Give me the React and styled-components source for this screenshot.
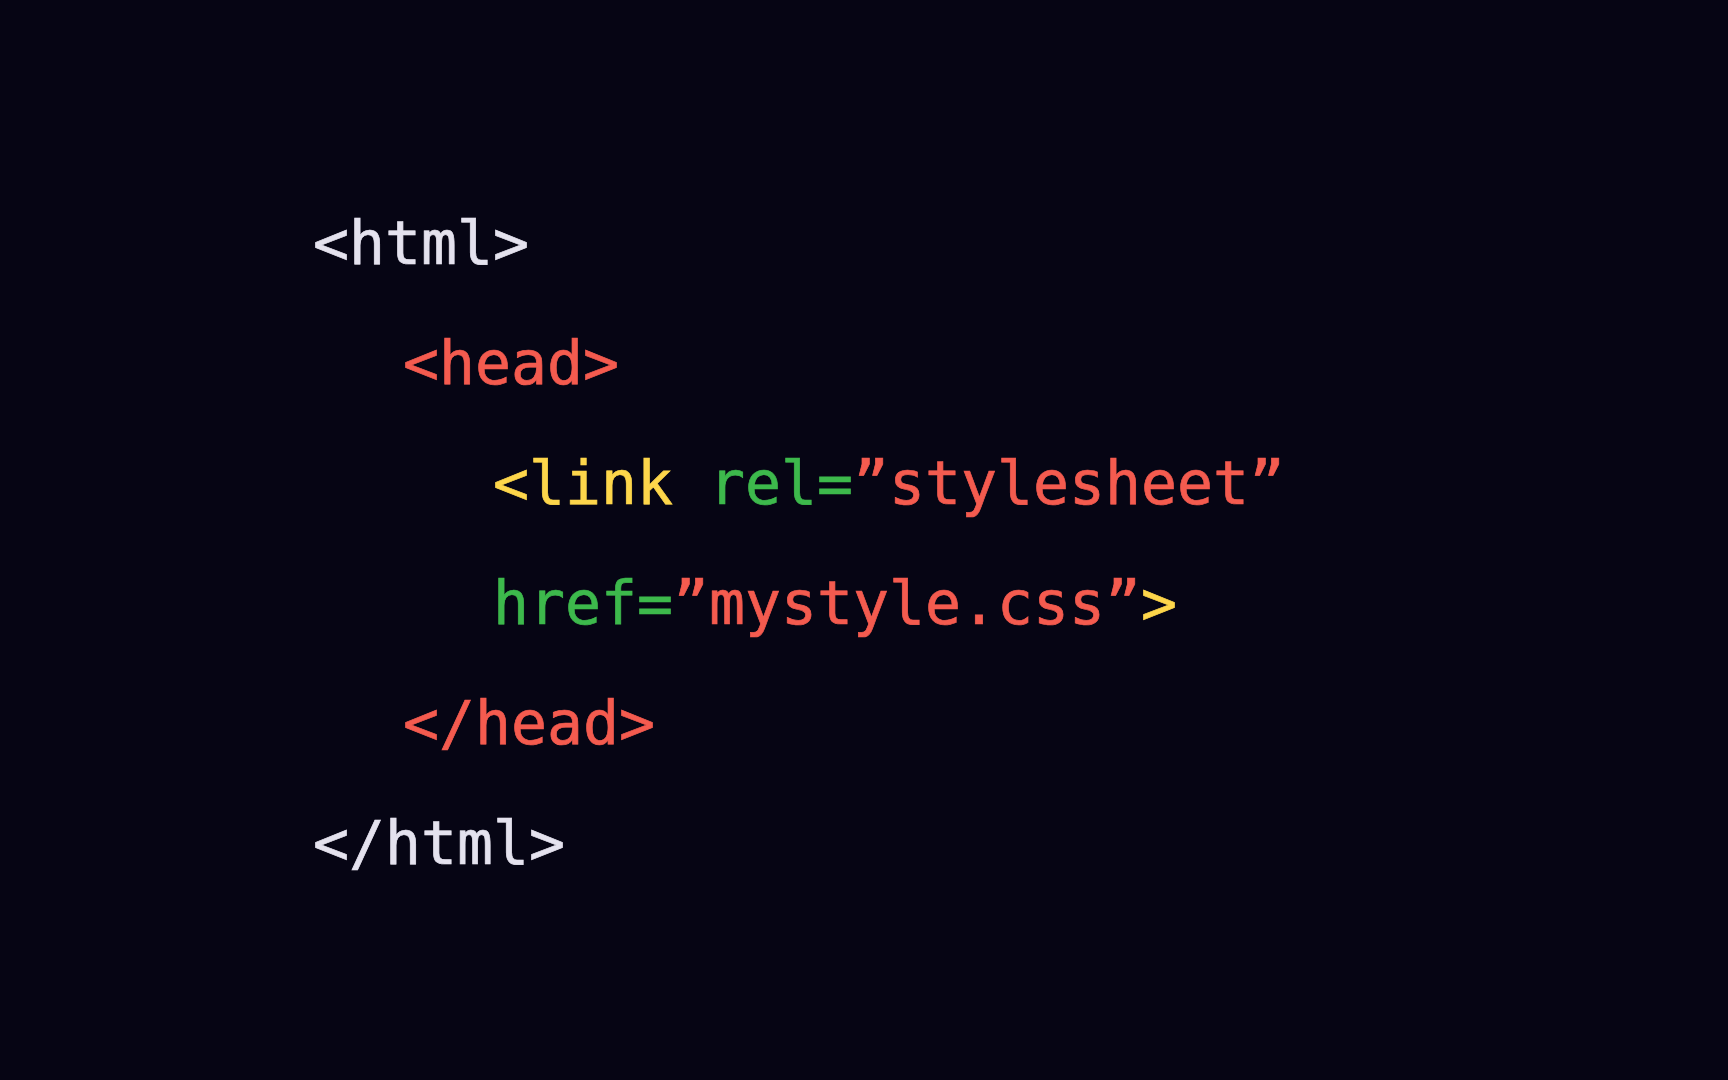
import styled, { createGlobalStyle } from "styled-components"

const GlobalStyle = createGlobalStyle`
  html, body {
    margin: 0;
    padding: 0;
    background: #060514;
  }
`

const colors = {
  plain: "#e4e2ee",
  red: "#f45b4f",
  yellow: "#fdd64b",
  green: "#3db94c",
}

const lines = [
  { level: 0, tokens: [["plain", "<html>"]] },
  { level: 1, tokens: [["red", "<head>"]] },
  {
    level: 2,
    tokens: [
      ["yellow", "<link "],
      ["green", "rel="],
      ["red", "\u201dstylesheet\u201d"],
    ],
  },
  {
    level: 2,
    tokens: [
      ["green", "href="],
      ["red", "\u201dmystyle.css\u201d"],
      ["yellow", ">"],
    ],
  },
  { level: 1, tokens: [["red", "</head>"]] },
  { level: 0, tokens: [["plain", "</html>"]] },
]

export default function App() {
  return (
    <Page>
      <GlobalStyle />
      <Code>
        {lines.map((line, i) => (
          <Line key={i} level={line.level}>
            {line.tokens.map(([tone, text], j) => (
              <Token key={j} tone={tone}>{text}</Token>
            ))}
          </Line>
        ))}
      </Code>
    </Page>
  )
}

const Page = styled.div`
  min-height: 100vh;
  width: 100%;
  background: #060514;
  padding: 183px 0 0 313px;
  box-sizing: border-box;
`

const Code = styled.pre`
  margin: 0;
  font-family: "DejaVu Sans Mono", "Liberation Mono", monospace;
  font-size: 59.8px;
  line-height: 120px;
  -webkit-text-stroke: 0.7px currentColor;
`

const Line = styled.div`
  padding-left: ${(props) => props.level * 90}px;
  white-space: pre;
`

const Token = styled.span`
  color: ${(props) => colors[props.tone]};
`
